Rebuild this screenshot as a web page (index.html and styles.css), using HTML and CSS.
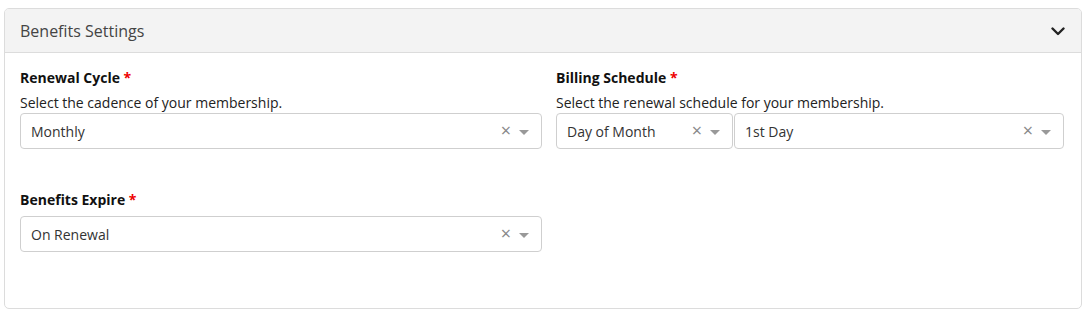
FILE: index.html
```html
<!DOCTYPE html>
<html>
<head>
<meta charset="utf-8">
<link rel="stylesheet" href="styles.css">
</head>
<body>
<div class="card">
  <div class="card-header">
    <span class="title">Benefits Settings</span>
    <svg class="chevron" width="14" height="9" viewBox="0 0 14 9"><path d="M1.5 1.5 L7 7 L12.5 1.5" fill="none" stroke="#222" stroke-width="2.4" stroke-linecap="round" stroke-linejoin="round"/></svg>
  </div>
  <div class="card-body">
    <div class="row">
      <div class="field">
        <div class="label">Renewal Cycle <span class="req">*</span></div>
        <div class="help">Select the cadence of your membership.</div>
        <div class="selects">
          <div class="select grow">
            <span class="value">Monthly</span>
            <span class="clear">×</span>
            <span class="arrow"></span>
          </div>
        </div>
      </div>
      <div class="field">
        <div class="label">Billing Schedule <span class="req">*</span></div>
        <div class="help">Select the renewal schedule for your membership.</div>
        <div class="selects">
          <div class="select day">
            <span class="value">Day of Month</span>
            <span class="clear">×</span>
            <span class="arrow"></span>
          </div>
          <div class="select grow">
            <span class="value">1st Day</span>
            <span class="clear">×</span>
            <span class="arrow"></span>
          </div>
        </div>
      </div>
    </div>
    <div class="row second">
      <div class="field">
        <div class="label">Benefits Expire <span class="req">*</span></div>
        <div class="selects">
          <div class="select grow">
            <span class="value">On Renewal</span>
            <span class="clear">×</span>
            <span class="arrow"></span>
          </div>
        </div>
      </div>
      <div class="field"></div>
    </div>
  </div>
</div>
</body>
</html>
```
FILE: styles.css
```css
* { box-sizing: border-box; }
html, body { margin: 0; padding: 0; background: #fff; }
body {
  padding: 8px 6px 9px 4px;
  font-family: "Open Sans", "Noto Sans", sans-serif;
  color: #222;
}
.card {
  border: 1px solid #dcdcdc;
  border-radius: 5px;
  height: 301px;
  overflow: hidden;
}
.card-header {
  height: 44px;
  background: #f3f3f3;
  border-bottom: 1px solid #dcdcdc;
  display: flex;
  align-items: center;
  justify-content: space-between;
  padding: 0 16px 0 15px;
}
.title {
  font-size: 16px;
  color: #444;
}
.chevron { display: block; margin-top: 1px; }
.card-body {
  padding: 15px 16px 0 15px;
}
.row {
  display: grid;
  grid-template-columns: 522px 508px;
  column-gap: 14px;
}
.row.second { margin-top: 41px; }
.label {
  font-size: 14px;
  font-weight: 700;
  line-height: 20px;
  color: #111;
}
.req { color: #e00; }
.help {
  font-size: 14px;
  line-height: 20px;
  margin-top: 5px;
  color: #222;
}
.row.second .selects { margin-top: 6px; }
.selects {
  display: flex;
  gap: 1px;
}
.select {
  height: 36px;
  border: 1px solid #cfcfcf;
  border-radius: 4px;
  display: flex;
  align-items: center;
  padding: 0 12px 0 10px;
  font-size: 14px;
  color: #333;
  background: #fff;
}
.select.grow { flex: 1; }
.select.day { width: 177px; }
.value { flex: 1; }
.clear {
  color: #888;
  font-size: 18px;
  line-height: 1;
  margin-right: 8px;
  margin-top: -2px;
}
.arrow {
  width: 0; height: 0;
  border-left: 5px solid transparent;
  border-right: 5px solid transparent;
  border-top: 5px solid #999;
  margin-top: 2px;
}
```
